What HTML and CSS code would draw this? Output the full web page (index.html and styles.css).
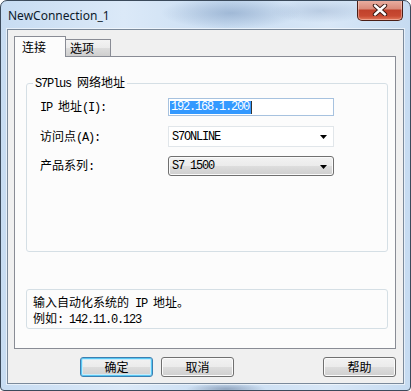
FILE: index.html
```html
<!DOCTYPE html>
<html lang="zh">

    <head>
        <meta charset="UTF-8">
        <meta name="viewport" content="width=device-width, initial-scale=1.0">
        <title>NewConnection_1</title>
        <link rel="stylesheet" href="styles.css">
    </head>

    <body>

        <div class="window">
            <div class="titlebar">
                <span class="title">NewConnection_1</span>
                <button class="close" type="button">
                    <svg width="16" height="12" viewBox="0 0 16 12">
                        <path d="M3 1.5 L13 10.5 M13 1.5 L3 10.5" stroke="#3b1a14" stroke-width="4.4" stroke-linecap="round"/>
                        <path d="M3 1.5 L13 10.5 M13 1.5 L3 10.5" stroke="#ffffff" stroke-width="2.4" stroke-linecap="round"/>
                    </svg>
                </button>
            </div>

            <div class="client">
                <div class="tabs">
                    <div class="tab active"><span class="zh">连接</span></div>
                    <div class="tab"><span class="zh">选项</span></div>
                </div>

                <section class="panel">
                    <fieldset class="group">
                        <legend>S7Plus <span class="zh">网络地址</span></legend>
                        <div class="rows">
                            <div class="row row-ip">
                                <label class="label" for="ip">IP <span class="zh">地址</span>(I):</label>
                                <div class="field" id="ip">
                                    <span class="selected">192.168.1.200</span><span class="caret"></span>
                                </div>
                            </div>
                            <div class="row row-access">
                                <label class="label"><span class="zh">访问点</span>(A):</label>
                                <div class="combo flat">
                                    <span>S7ONLINE</span>
                                    <svg class="arrow" width="7" height="4" viewBox="0 0 7 4"><path d="M0 0H7L3.5 4Z" fill="#000"/></svg>
                                </div>
                            </div>
                            <div class="row row-family">
                                <label class="label"><span class="zh">产品系列</span>:</label>
                                <div class="combo raised">
                                    <span>S7 1500</span>
                                    <svg class="arrow" width="7" height="4" viewBox="0 0 7 4"><path d="M0 0H7L3.5 4Z" fill="#000"/></svg>
                                </div>
                            </div>
                        </div>
                    </fieldset>

                    <div class="info">
                        <div><span class="zh">输入自动化系统的</span> IP <span class="zh">地址。</span></div>
                        <div><span class="zh">例如</span>: 142.11.0.123</div>
                    </div>
                </section>

                <div class="actions">
                    <button class="btn default" type="button"><span class="zh">确定</span></button>
                    <button class="btn" type="button"><span class="zh">取消</span></button>
                    <button class="btn help" type="button"><span class="zh">帮助</span></button>
                </div>
            </div>
        </div>

    </body>

</html>
```

FILE: styles.css
```css
body {
    margin: 0;
    font-family: "Liberation Mono", "Noto Sans CJK SC", monospace;
    font-size: 12px;
    letter-spacing: -1.2px;
    color: #000;
}

.zh {
    font-family: "Noto Sans CJK SC", sans-serif;
    font-size: 12px;
    letter-spacing: 0;
}

.window {
    box-sizing: border-box;
    width: 411px;
    height: 391px;
    border: 1px solid #3b4a5b;
    border-radius: 7px 7px 4px 4px;
    padding: 0 6px 6px;
    display: flex;
    flex-direction: column;
    overflow: hidden;
    background:
        radial-gradient(ellipse 70px 16px at 230px 12px, rgba(110, 140, 180, 0.45), transparent),
        radial-gradient(ellipse 50px 12px at 320px 10px, rgba(130, 155, 190, 0.35), transparent),
        radial-gradient(ellipse 40px 6px at 225px 388px, rgba(90, 110, 140, 0.5), transparent),
        linear-gradient(90deg, #c7dcf2, #dbe9f8 30%, #c9ddf2 55%, #d8e7f7 80%, #c6dbf1);
}

.titlebar {
    height: 28px;
    display: flex;
    align-items: flex-start;
}

.title {
    font-family: "Noto Sans", sans-serif;
    font-size: 12px;
    letter-spacing: 0;
    line-height: 16px;
    margin: 7px 0 0 1px;
    color: #0c1a2b;
}

.close {
    margin: -1px 1px 0 auto;
    width: 46px;
    height: 21px;
    padding: 0;
    border: 1px solid #4a1e16;
    border-top: none;
    border-radius: 0 0 5px 5px;
    display: flex;
    align-items: center;
    justify-content: center;
    background: linear-gradient(#eab1a4, #d98a79 45%, #c0412b 50%, #c84a32 80%, #e27a5c);
    box-shadow: inset 0 0 0 1px rgba(255, 220, 210, 0.45);
}

.client {
    flex: 1;
    display: flex;
    flex-direction: column;
    border: 1px solid #7b8a9b;
    background: #f0f0f0;
    box-shadow: 0 0 0 1px rgba(255, 255, 255, 0.55);
}

.tabs {
    display: flex;
    align-items: flex-end;
    height: 20px;
    padding: 6px 0 0 6px;
}

.tab {
    box-sizing: border-box;
    width: 46px;
    height: 17px;
    margin-left: -1px;
    padding-left: 4px;
    border: 1px solid #898c95;
    border-bottom: none;
    line-height: 15px;
    background: linear-gradient(#f3f3f3, #ebebeb 50%, #dddddd 50%, #cfcfcf);
}

.tab.active {
    position: relative;
    z-index: 1;
    width: 52px;
    height: 21px;
    margin-left: 0;
    margin-bottom: -1px;
    padding-left: 7px;
    line-height: 19px;
    background: #fcfcfc;
}

.panel {
    box-sizing: border-box;
    height: 293px;
    margin: 0 7px 0 6px;
    padding: 0 7px 0 11px;
    border: 1px solid #898c95;
    background: #fcfcfc;
    display: flex;
    flex-direction: column;
}

.group {
    box-sizing: border-box;
    height: 176px;
    min-width: 0;
    margin: 19px 0 0;
    padding: 8px 0 0;
    border: 1px solid #d5dfe5;
    border-radius: 3px;
}

.group legend {
    margin-left: 6px;
    padding: 0 2px;
    line-height: 12px;
}

.rows {
    display: flex;
    flex-direction: column;
    gap: 10px;
}

.row {
    display: flex;
    align-items: center;
}

.row-ip {
    height: 18px;
}

.row-access {
    height: 21px;
}

.row-family {
    height: 20px;
    margin-top: -1px;
}

.label {
    box-sizing: border-box;
    width: 141px;
    padding-left: 13px;
    line-height: 14px;
}

.field,
.combo {
    box-sizing: border-box;
    width: 166px;
    height: 100%;
    display: flex;
    align-items: center;
}

.field {
    padding-left: 1px;
    border: 1px solid #a7c2df;
    background: #fff;
}

.selected {
    background: #3399ff;
    color: #fff;
    line-height: 13px;
    padding: 0 2px 0 1px;
}

.caret {
    width: 1px;
    height: 13px;
    background: #333;
}

.combo {
    padding-left: 3px;
}

.combo.flat {
    border: 1px solid #e1e6ea;
    background: #fff;
}

.combo.raised {
    border: 1px solid #707070;
    border-radius: 3px;
    background: linear-gradient(#f2f2f2, #ebebeb 50%, #dddddd 50%, #cfcfcf);
    box-shadow: inset 0 0 0 1px #fafafa;
}

.arrow {
    margin: 1px 6px 0 auto;
}

.info {
    box-sizing: border-box;
    height: 40px;
    margin-top: 37px;
    padding: 5px 0 0 6px;
    border: 1px solid #d5dfe5;
    border-radius: 3px;
    line-height: 13px;
}

.actions {
    display: flex;
    gap: 8px;
    padding: 8px 7px 0 72px;
}

.btn {
    box-sizing: border-box;
    width: 73px;
    height: 20px;
    padding: 0;
    border: 1px solid #707070;
    border-radius: 3px;
    line-height: 16px;
    color: #000;
    background: linear-gradient(#f2f2f2, #ebebeb 50%, #dddddd 50%, #cfcfcf);
    box-shadow: inset 0 0 0 1px #fbfbfb;
}

.btn.default {
    border-color: #3c7fb1;
    box-shadow: inset 0 0 0 1px #58c7f3, inset 0 0 0 2px #c8ebfa;
}

.btn.help {
    margin-left: auto;
}
```
